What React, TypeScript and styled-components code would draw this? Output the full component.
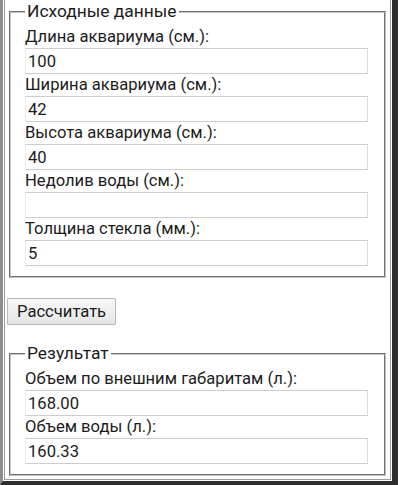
import React from "react";
import styled, { createGlobalStyle } from "styled-components";

const Global = createGlobalStyle`
  html, body { margin: 0; padding: 0; background: #fff; }
  body { font-family: Roboto, "Noto Sans", "Liberation Sans", sans-serif; color: #1c1c1c; }
  * { box-sizing: border-box; }
`;

const Frame = styled.div`
  width: 398px;
  height: 485px;
  border-left: 3px solid #8d8d8d;
  border-right: 6px solid #2e2e2e;
  border-bottom: 4px solid #2e2e2e;
  display: flex;
  flex-direction: column;
`;

const Inner = styled.div`
  flex: 1;
  margin: 0 1px 1px 1px;
  border-left: 1px solid #9c9c9c;
  border-right: 1px solid #9c9c9c;
  border-bottom: 1px solid #9c9c9c;
  padding: 2px 2px 0 2px;
  display: flex;
  flex-direction: column;
  align-items: flex-start;
`;

const Fieldset = styled.fieldset<{ $top?: number }>`
  margin: ${(p) => p.$top ?? 0}px 2px 0 2px;
  align-self: stretch;
  border: 2px groove #c4c4c4;
  padding: 5px 16px 10px 14px;
  min-width: 0;
`;

const Legend = styled.legend`
  font-size: 17.4px;
  line-height: 19px;
  padding: 0 2px;
  color: #1c1c1c;
`;

const Label = styled.label`
  display: block;
  height: 22px;
  line-height: 22px;
  font-size: 16.6px;
  color: #1c1c1c;
  white-space: nowrap;
`;

const Input = styled.input`
  display: block;
  width: 100%;
  height: 26px;
  margin: 0;
  padding: 0 2px;
  border: 1px solid #cdcdcd;
  border-left-color: #ededed;
  border-right-color: #dcdcdc;
  font-family: inherit;
  font-size: 16.6px;
  color: #1c1c1c;
  background: #fff;
  outline: none;
`;

const Button = styled.button`
  margin: 20px 0 0 0;
  height: 27px;
  padding: 0 9px;
  font-family: inherit;
  font-size: 16.6px;
  color: #1c1c1c;
  border: 1px solid #b9b9b9;
  border-radius: 1px;
  background: linear-gradient(#f7f7f7, #e6e6e6);
`;

type Field = { label: string; value: string };

const source: Field[] = [
  { label: "Длина аквариума (см.):", value: "100" },
  { label: "Ширина аквариума (см.):", value: "42" },
  { label: "Высота аквариума (см.):", value: "40" },
  { label: "Недолив воды (см.):", value: "" },
  { label: "Толщина стекла (мм.):", value: "5" },
];

const result: Field[] = [
  { label: "Объем по внешним габаритам (л.):", value: "168.00" },
  { label: "Объем воды (л.):", value: "160.33" },
];

function Row({ label, value }: Field) {
  return (
    <div>
      <Label>{label}</Label>
      <Input defaultValue={value} />
    </div>
  );
}

export default function App() {
  return (
    <>
      <Global />
      <Frame>
        <Inner>
          <Fieldset>
            <Legend>Исходные данные</Legend>
            {source.map((f) => (
              <Row key={f.label} {...f} />
            ))}
          </Fieldset>
          <Button>Рассчитать</Button>
          <Fieldset $top={19}>
            <Legend>Результат</Legend>
            {result.map((f) => (
              <Row key={f.label} {...f} />
            ))}
          </Fieldset>
        </Inner>
      </Frame>
    </>
  );
}
